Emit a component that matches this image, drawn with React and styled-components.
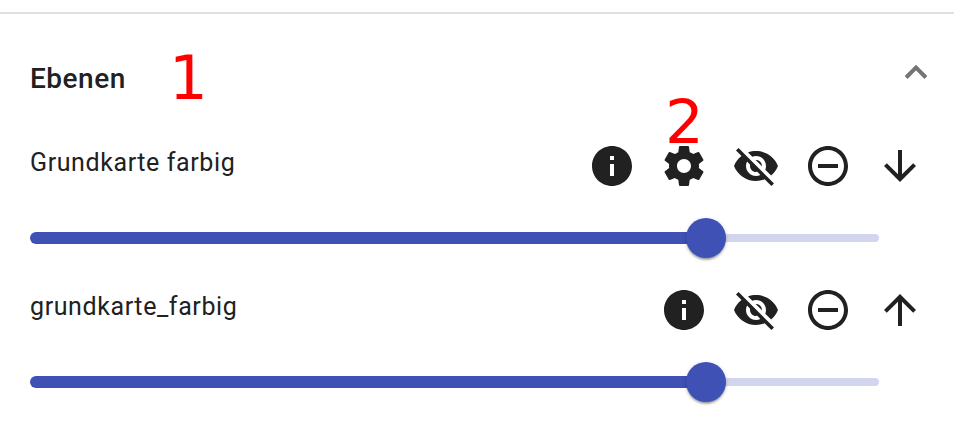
import React from "react";
import styled, { createGlobalStyle } from "styled-components";

const Global = createGlobalStyle`
  * { box-sizing: border-box; }
  body { margin: 0; background: #fff; color: #212121; font-family: Roboto, sans-serif; overflow: hidden; }
`;

const Panel = styled.main`
  height: 428px;
  padding-top: 12px;
`;

const Content = styled.section`
  position: relative;
  border-top: 2px solid #e0e0e0;
  padding: 28px 26px 0 30px;
`;

const Header = styled.header`
  display: flex;
  align-items: center;
  justify-content: space-between;
  height: 72px;
`;

const Title = styled.h2`
  margin: 2px 0 0;
  font-size: 28px;
  line-height: 32px;
  font-weight: 500;
  letter-spacing: 0.5px;
`;

const Chevron = styled.svg`
  display: block;
  width: 24px;
  height: 16px;
  margin-bottom: 12px;
`;

const Layer = styled.article`
  height: 144px;
`;

const LayerRow = styled.div`
  display: flex;
  align-items: center;
  justify-content: space-between;
  height: 104px;
`;

const LayerName = styled.span`
  font-size: 25px;
  line-height: 32px;
  letter-spacing: 0.6px;
  margin-bottom: 6px;
`;

const Actions = styled.div`
  display: flex;
  gap: 24px;
  margin-right: 4px;
`;

const Action = styled.button`
  display: block;
  width: 48px;
  height: 48px;
  border: 0;
  padding: 0;
  color: inherit;
  background: none;
`;

const Icon = styled.svg`
  display: block;
  width: 48px;
  height: 48px;
  fill: currentColor;
`;

const Slider = styled.div`
  display: flex;
  align-items: center;
  width: 849px;
  height: 40px;
`;

const Filled = styled.div`
  width: 676px;
  height: 12px;
  border-radius: 6px 0 0 6px;
  background: #3f51b5;
`;

const Thumb = styled.div`
  flex: none;
  width: 40px;
  height: 40px;
  margin: 0 -20px;
  border-radius: 50%;
  background: #3f51b5;
  box-shadow: 0 3px 2px -2px #0003, 0 2px 2px #0003, 0 1px 5px #0002;
  z-index: 1;
`;

const Remaining = styled.div`
  flex: 1;
  height: 8px;
  border-radius: 0 4px 4px 0;
  background: #d1d5ed;
`;

const Marker = styled.span`
  position: absolute;
  left: ${p => p.$x}px;
  top: ${p => p.$y}px;
  color: #f00;
  font: 61px/60px "DejaVu Sans", sans-serif;
`;

const paths = {
  info: "M12 2C6.48 2 2 6.48 2 12s4.48 10 10 10 10-4.48 10-10S17.52 2 12 2zm1 15h-2v-6h2v6zm0-8h-2V7h2v2z",
  settings: "M19.43 12.98c.04-.32.07-.64.07-.98s-.03-.66-.07-.98l2.11-1.65c.19-.15.24-.42.12-.64l-2-3.46c-.12-.22-.39-.3-.61-.22l-2.49 1c-.52-.4-1.08-.73-1.69-.98l-.38-2.65C14.46 2.18 14.25 2 14 2h-4c-.25 0-.46.18-.49.42l-.38 2.65c-.61.25-1.17.59-1.69.98l-2.49-1c-.23-.09-.49 0-.61.22l-2 3.46c-.13.22-.07.49.12.64l2.11 1.65c-.04.32-.07.65-.07.98s.03.66.07.98l-2.11 1.65c-.19.15-.24.42-.12.64l2 3.46c.12.22.39.3.61.22l2.49-1c.52.4 1.08.73 1.69.98l.38 2.65c.03.24.24.42.49.42h4c.25 0 .46-.18.49-.42l.38-2.65c.61-.25 1.17-.59 1.69-.98l2.49 1c.23.09.49 0 .61-.22l2-3.46c.12-.22.07-.49-.12-.64l-2.11-1.65zM12 15.5c-1.93 0-3.5-1.57-3.5-3.5s1.57-3.5 3.5-3.5 3.5 1.57 3.5 3.5-1.57 3.5-3.5 3.5z",
  hidden: "M12 7c2.76 0 5 2.24 5 5 0 .65-.13 1.26-.36 1.83l2.92 2.92c1.51-1.26 2.7-2.89 3.43-4.75-1.73-4.39-6-7.5-11-7.5-1.4 0-2.74.25-3.98.7l2.16 2.16C10.74 7.13 11.35 7 12 7zM2 4.27l2.28 2.28.46.46C3.08 8.3 1.78 10.02 1 12c1.73 4.39 6 7.5 11 7.5 1.55 0 3.03-.3 4.38-.84l.42.42L19.73 22 21 20.73 3.27 3 2 4.27zM7.53 9.8l1.55 1.55c-.05.21-.08.43-.08.65 0 1.66 1.34 3 3 3 .22 0 .44-.03.65-.08l1.55 1.55c-.67.33-1.41.53-2.2.53-2.76 0-5-2.24-5-5 0-.79.2-1.53.53-2.2zm4.31-.78l3.15 3.15.02-.16c0-1.66-1.34-3-3-3l-.17.01z",
  remove: "M7 11v2h10v-2H7zm5-9C6.48 2 2 6.48 2 12s4.48 10 10 10 10-4.48 10-10S17.52 2 12 2zm0 18c-4.41 0-8-3.59-8-8s3.59-8 8-8 8 3.59 8 8-3.59 8-8 8z",
  down: "M20 12l-1.41-1.41L13 16.17V4h-2v12.17l-5.58-5.59L4 12l8 8 8-8z",
  up: "M4 12l1.41 1.41L11 7.83V20h2V7.83l5.58 5.59L20 12l-8-8-8 8z",
};

const layers = [
  { name: "Grundkarte farbig", actions: ["info", "settings", "hidden", "remove", "down"] },
  { name: "grundkarte_farbig", actions: ["info", "hidden", "remove", "up"] },
];

export default function App() {
  return (
    <Panel>
      <Global />
      <Content>
        <Header>
          <Title>Ebenen</Title>
          <Chevron viewBox="0 0 24 16" fill="none" stroke="#757575" strokeWidth="4">
            <path d="m2.1 13.5 9.9-9.9 9.9 9.9" />
          </Chevron>
        </Header>
        {layers.map(layer => (
          <Layer key={layer.name}>
            <LayerRow>
              <LayerName>{layer.name}</LayerName>
              <Actions>
                {layer.actions.map(name => (
                  <Action key={name} aria-label={name}>
                    <Icon viewBox="0 0 24 24"><path d={paths[name]} /></Icon>
                  </Action>
                ))}
              </Actions>
            </LayerRow>
            <Slider><Filled /><Thumb /><Remaining /></Slider>
          </Layer>
        ))}
        <Marker $x={169} $y={34}>1</Marker>
        <Marker $x={665} $y={78}>2</Marker>
      </Content>
    </Panel>
  );
}
